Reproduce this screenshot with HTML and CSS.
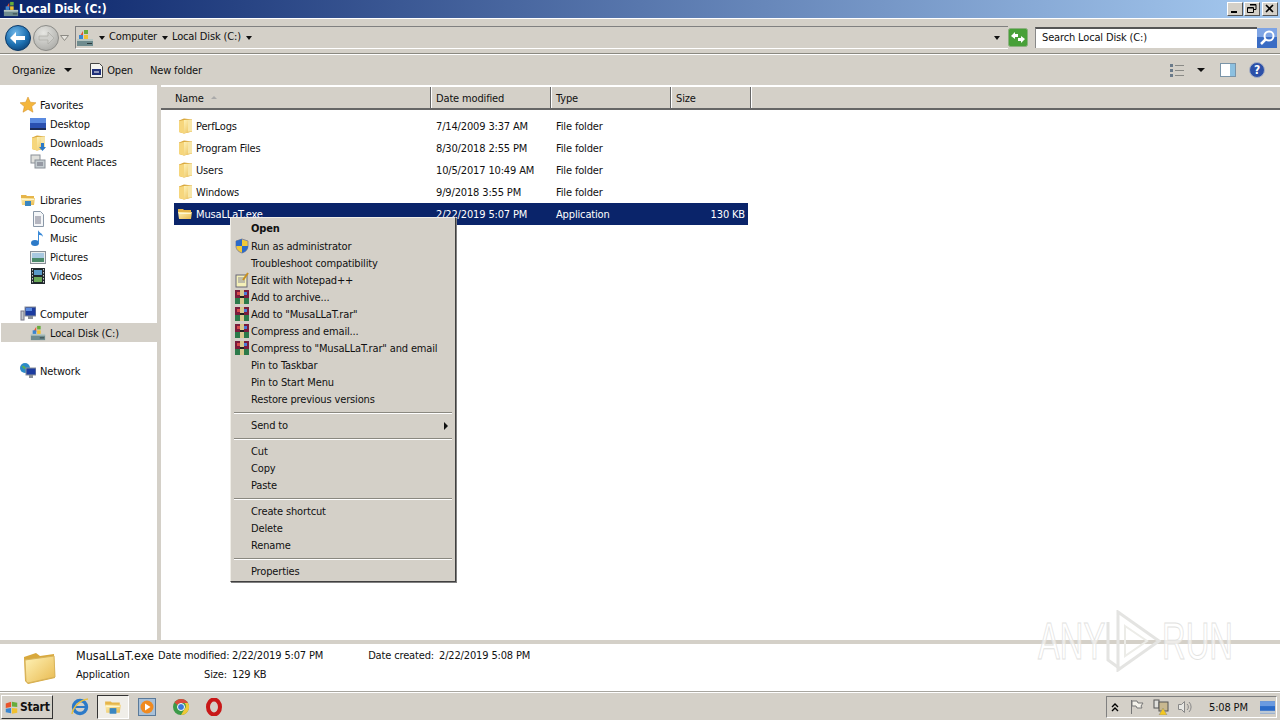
FILE: index.html
```html
<!DOCTYPE html>
<html>
<head>
	<meta charset="UTF-8">
	<title>Local Disk (C:)</title>
	<link rel="stylesheet" href="styles.css">
</head>
<body>
	<svg class="defs" width="0" height="0">
		<defs>
			<linearGradient id="gFolder" x1="0" y1="0" x2="1" y2="1">
				<stop offset="0" stop-color="#fff3b8"/>
				<stop offset="1" stop-color="#e8b94e"/>
			</linearGradient>
			<radialGradient id="gBack" cx=".4" cy=".3" r=".8">
				<stop offset="0" stop-color="#6fb6e8"/>
				<stop offset=".6" stop-color="#1c6fb0"/>
				<stop offset="1" stop-color="#0c3c6e"/>
			</radialGradient>
			<radialGradient id="gForward" cx=".4" cy=".3" r=".8">
				<stop offset="0" stop-color="#e6e6e2"/>
				<stop offset="1" stop-color="#a8a8a4"/>
			</radialGradient>
			<symbol id="i-folder" viewBox="0 0 16 16">
				<path d="M2 2.500l5-2 8 1v12l-8 2-5-1.500z" fill="#d9a73c"/>
				<path d="M7 2l8-.500v12l-8 2z" fill="url(#gFolder)"/>
				<path d="M2 3l5-1v13.500l-5-1.500z" fill="#f6d67c"/>
				<path d="M11 2h4v11.500h-4z" fill="#f7e6a8"/>
			</symbol>
			<symbol id="i-folder-open" viewBox="0 0 16 16">
				<path d="M1 3h5l1 1h7v3H1z" fill="#e6b54a"/>
				<path d="M1 6h14l-1 7H2z" fill="url(#gFolder)"/>
				<path d="M2 7h12v1H2z" fill="#fff6cf"/>
			</symbol>
			<symbol id="i-drive" viewBox="0 0 18 18">
				<rect x="1" y="11" width="16" height="6" fill="#6f8c8f"/>
				<rect x="1" y="10" width="16" height="2" fill="#b6c6c2"/>
				<rect x="11" y="14" width="5" height="1" fill="#2a3a3c"/>
				<path d="M4 7l3-5v6z" fill="#e8542c"/>
				<rect x="8" y="1" width="4" height="4" fill="#67ac3c"/>
				<rect x="3" y="6" width="4" height="4" fill="#3a86d0"/>
				<rect x="8" y="6" width="4" height="4" fill="#f0c030"/>
			</symbol>
			<symbol id="i-rar" viewBox="0 0 16 16">
				<rect x="1" y="1" width="14" height="14" fill="#7a1c3c"/>
				<rect x="1" y="9" width="14" height="6" fill="#2c7a4a"/>
				<rect x="3" y="3" width="4" height="3" fill="#d84a4a"/>
				<rect x="9" y="3" width="4" height="3" fill="#4a7ad8"/>
				<rect x="6" y="1" width="4" height="14" fill="#d8c890"/>
				<rect x="6" y="7" width="4" height="2" fill="#222"/>
			</symbol>
		</defs>
	</svg>

	<div class="window">
		<div class="title-bar">
			<svg width="16" height="16"><use href="#i-drive"/></svg>
			<span class="title-txt">Local Disk (C:)</span>
			<div class="win-btns">
				<div class="win-btn"><svg width="14" height="12" viewBox="0 0 14 12"><rect x="3" y="8" width="6" height="2" fill="#000"/></svg></div>
				<div class="win-btn"><svg width="14" height="12" viewBox="0 0 14 12"><path d="M5 1.500h6v5h-2M2.500 4.500h6v5h-6z" fill="none" stroke="#000"/><path d="M5 2h6M3 5h5" stroke="#000"/></svg></div>
				<div class="win-btn win-close"><svg width="14" height="12" viewBox="0 0 14 12"><path d="M3 2l7 7M10 2l-7 7" stroke="#000" stroke-width="1.600"/></svg></div>
			</div>
		</div>

		<div class="nav-bar">
			<svg class="nav-round" width="26" height="26" viewBox="0 0 26 26">
				<circle cx="13" cy="13" r="12.500" fill="url(#gBack)" stroke="#0d3a68"/>
				<path d="M5 13l6-6v4h9v4h-9v4z" fill="#fff"/>
			</svg>
			<svg class="nav-round" width="26" height="26" viewBox="0 0 26 26">
				<circle cx="13" cy="13" r="12.500" fill="url(#gForward)" stroke="#8c8c88"/>
				<path d="M21 13l-6-6v4H6v4h9v4z" fill="#cfcfcb" stroke="#a4a4a0" stroke-width=".6"/>
			</svg>
			<svg class="nav-drop" width="9" height="6" viewBox="0 0 9 6"><path d="M.5.5h8L4.500 5.500z" fill="#e6e4de" stroke="#8c8a84"/></svg>
			<div class="address">
				<svg width="18" height="18"><use href="#i-drive"/></svg>
				<i class="arrow addr-first"></i>
				<span class="crumb">Computer</span>
				<i class="arrow"></i>
				<span class="crumb">Local Disk (C:)</span>
				<i class="arrow"></i>
				<i class="arrow addr-drop"></i>
			</div>
			<svg class="refresh" width="20" height="19" viewBox="0 0 20 19">
				<rect x=".5" y=".5" width="19" height="18" rx="2" fill="#48a038" stroke="#8cb080"/>
				<path d="M3 8l4-4v2h3v3H7v2zM17 11l-4 4v-2h-3v-3h3V8z" fill="#fff"/>
			</svg>
			<div class="search-box">Search Local Disk (C:)</div>
			<svg width="20" height="20" viewBox="0 0 20 20">
				<rect width="20" height="20" fill="#3a6cc4"/>
				<rect width="20" height="9" fill="#7ea4e4"/>
				<circle cx="12" cy="8" r="4.500" fill="none" stroke="#fff" stroke-width="2"/>
				<path d="M9 11l-5 5" stroke="#fff" stroke-width="2.500"/>
			</svg>
		</div>

		<div class="tool-bar">
			<span class="tool-item">Organize</span>
			<i class="arrow tool-arrow"></i>
			<svg width="15" height="17" viewBox="0 0 15 17">
				<path d="M1.500 1.500h9l3 3v11h-12z" fill="#f4f4f0" stroke="#444"/>
				<rect x="3" y="7" width="9" height="6" fill="#20307a"/>
				<path d="M5 10h5" stroke="#fff"/>
			</svg>
			<span class="tool-item tool-open">Open</span>
			<span class="tool-item tool-new">New folder</span>
			<svg class="views-icon" width="15" height="13" viewBox="0 0 15 13">
				<path d="M1 1.500h3M1 6.500h3M1 11.500h3" stroke="#6a7a8a" stroke-width="3"/>
				<path d="M6 1.500h9M6 6.500h9M6 11.500h9" stroke="#8a8a86"/>
			</svg>
			<i class="arrow views-arrow"></i>
			<svg width="16" height="14" viewBox="0 0 16 14">
				<rect x=".5" y=".5" width="15" height="13" fill="#fff" stroke="#7a94a8"/>
				<rect x="10" y="1" width="5" height="12" fill="#8cc0e0"/>
			</svg>
			<svg class="help-icon" width="16" height="16" viewBox="0 0 16 16">
				<circle cx="8" cy="8" r="7.500" fill="#2c50a8" stroke="#a8b0c4"/>
				<text x="8" y="12" class="help-mark">?</text>
			</svg>
		</div>

		<div class="main">
			<div class="side-bar">
				<div class="tree-row tree-top">
					<svg width="16" height="16" viewBox="0 0 16 16"><path d="M8 0l2.300 5.200 5.700.6-4.300 3.800 1.300 5.600L8 12.300l-5 2.900 1.300-5.600L0 5.800l5.700-.6z" fill="#f4b63c" stroke="#d08a20" stroke-width=".5"/></svg>
					<span>Favorites</span>
				</div>
				<div class="tree-row tree-sub">
					<svg width="16" height="16" viewBox="0 0 16 16"><rect y="2" width="16" height="12" fill="#2a50b0"/><rect y="2" width="16" height="5" fill="#5a8ae0"/><rect y="12" width="16" height="2" fill="#1c2c58"/></svg>
					<span>Desktop</span>
				</div>
				<div class="tree-row tree-sub">
					<svg width="16" height="16" viewBox="0 0 16 16"><use href="#i-folder"/><path d="M11 8h3v4h2l-3.500 4L9 12h2z" fill="#2c7ac8"/></svg>
					<span>Downloads</span>
				</div>
				<div class="tree-row tree-sub tree-end">
					<svg width="16" height="16" viewBox="0 0 16 16"><rect x="1" y="1" width="9" height="8" fill="#e0e0dc" stroke="#8a9098"/><rect x="5" y="6" width="10" height="8" fill="#c4ccd0" stroke="#8a9098"/><path d="M7 9h6M7 11h6" stroke="#667"/></svg>
					<span>Recent Places</span>
				</div>

				<div class="tree-row tree-top">
					<svg width="16" height="16" viewBox="0 0 16 16"><use href="#i-folder-open"/><rect x="5" y="9" width="6" height="5" fill="#3a86c0"/></svg>
					<span>Libraries</span>
				</div>
				<div class="tree-row tree-sub">
					<svg width="16" height="16" viewBox="0 0 16 16"><path d="M3.500 .5h7l3 3v12h-10z" fill="#f4f6f8" stroke="#8a98a8"/><path d="M5 6h6M5 8h6M5 10h6M5 12h6" stroke="#778"/></svg>
					<span>Documents</span>
				</div>
				<div class="tree-row tree-sub">
					<svg width="16" height="16" viewBox="0 0 16 16"><ellipse cx="5" cy="13" rx="4" ry="3" fill="#2c7ac8"/><path d="M8 13V0c1 3 5 3 5 7-1-2-3-2-4-2v8z" fill="#3a8ad8"/></svg>
					<span>Music</span>
				</div>
				<div class="tree-row tree-sub">
					<svg width="16" height="16" viewBox="0 0 16 16"><rect x=".5" y="2.500" width="15" height="12" fill="#e8ecec" stroke="#8a9098"/><rect x="2" y="4" width="12" height="5" fill="#a8c8e0"/><rect x="2" y="9" width="12" height="4" fill="#4a8a6a"/></svg>
					<span>Pictures</span>
				</div>
				<div class="tree-row tree-sub tree-end">
					<svg width="16" height="16" viewBox="0 0 16 16"><rect x="1" width="14" height="16" fill="#20282c"/><rect x="4" y="2" width="8" height="5" fill="#5a9ac8"/><rect x="4" y="9" width="8" height="5" fill="#6aa858"/><path d="M2.500 1v14M13.500 1v14" stroke="#ccc" stroke-dasharray="1.500 1.500"/></svg>
					<span>Videos</span>
				</div>

				<div class="tree-row tree-top">
					<svg width="16" height="16" viewBox="0 0 16 16"><rect x="5" y="1" width="11" height="9" fill="#1c3ca0" stroke="#8a9098"/><rect x="6" y="2" width="6" height="3" fill="#5a8ae0"/><rect x="8" y="10" width="5" height="3" fill="#8a9098"/><rect x="1" y="5" width="3" height="9" fill="#c4c8cc" stroke="#778"/></svg>
					<span>Computer</span>
				</div>
				<div class="tree-row tree-sub tree-active tree-end">
					<svg width="16" height="16" viewBox="0 0 18 18"><use href="#i-drive"/></svg>
					<span>Local Disk (C:)</span>
				</div>

				<div class="tree-row tree-top">
					<svg width="16" height="16" viewBox="0 0 16 16"><circle cx="5" cy="5" r="5" fill="#2c8ac8"/><path d="M2 3c2-1 3 1 4 2-1 2-3 1-4-2z" fill="#58b050"/><rect x="6" y="5" width="10" height="7" fill="#1c3ca0" stroke="#8a9098"/><rect x="9" y="12" width="4" height="3" fill="#8a9098"/></svg>
					<span>Network</span>
				</div>
			</div>

			<div class="content">
				<div class="col-head">
					<div class="col col-name">Name <i class="sort-mark"></i></div>
					<div class="col col-date">Date modified</div>
					<div class="col col-type">Type</div>
					<div class="col col-size">Size</div>
					<div class="col col-rest"></div>
				</div>
				<div class="file-list">
					<div class="file-row">
						<div class="cell cell-name"><svg width="16" height="16"><use href="#i-folder"/></svg>PerfLogs</div>
						<div class="cell cell-date">7/14/2009 3:37 AM</div>
						<div class="cell cell-type">File folder</div>
						<div class="cell cell-size"></div>
					</div>
					<div class="file-row">
						<div class="cell cell-name"><svg width="16" height="16"><use href="#i-folder"/></svg>Program Files</div>
						<div class="cell cell-date">8/30/2018 2:55 PM</div>
						<div class="cell cell-type">File folder</div>
						<div class="cell cell-size"></div>
					</div>
					<div class="file-row">
						<div class="cell cell-name"><svg width="16" height="16"><use href="#i-folder"/></svg>Users</div>
						<div class="cell cell-date">10/5/2017 10:49 AM</div>
						<div class="cell cell-type">File folder</div>
						<div class="cell cell-size"></div>
					</div>
					<div class="file-row">
						<div class="cell cell-name"><svg width="16" height="16"><use href="#i-folder"/></svg>Windows</div>
						<div class="cell cell-date">9/9/2018 3:55 PM</div>
						<div class="cell cell-type">File folder</div>
						<div class="cell cell-size"></div>
					</div>
					<div class="file-row file-selected">
						<div class="cell cell-name"><svg width="16" height="16"><use href="#i-folder-open"/></svg>MusaLLaT.exe</div>
						<div class="cell cell-date">2/22/2019 5:07 PM</div>
						<div class="cell cell-type">Application</div>
						<div class="cell cell-size">130 KB</div>
					</div>
				</div>
			</div>
		</div>

		<div class="details">
			<svg class="details-icon" width="36" height="36" viewBox="0 0 36 36">
				<path d="M2 8l12-4 4 3 14-2 1 24-27 6-3-3z" fill="#d8a83c"/>
				<path d="M3 11l29-4 1 21-27 6-2-2z" fill="url(#gFolder)" stroke="#d8b45c"/>
			</svg>
			<div class="details-grid">
				<div class="details-name">MusaLLaT.exe</div>
				<div class="details-label">Date modified:</div>
				<div class="details-val">2/22/2019 5:07 PM</div>
				<div class="details-label">Date created:</div>
				<div class="details-val">2/22/2019 5:08 PM</div>
				<div>Application</div>
				<div class="details-label">Size:</div>
				<div class="details-val">129 KB</div>
			</div>
		</div>

		<div class="task-bar">
			<div class="start-btn">
				<svg width="15" height="15" viewBox="0 0 17 17">
					<path d="M2 4l6-2v6l-6 1z" fill="#e8542c"/><path d="M9 2l6 1v5l-6-.500z" fill="#67ac3c"/>
					<path d="M2 10l6-1v6l-6-1z" fill="#3a86d0"/><path d="M9 9l6 .500v5l-6 1z" fill="#f0c030"/>
				</svg>
				<span>Start</span>
			</div>
			<svg class="task-ie" width="20" height="20" viewBox="0 0 20 20">
				<circle cx="10" cy="10" r="6.500" fill="none" stroke="#2c7ac8" stroke-width="3.400"/>
				<path d="M5 10h10" stroke="#2c7ac8" stroke-width="2"/>
				<path d="M2 17C3 10 10 3 18 2" fill="none" stroke="#e8c040" stroke-width="1.500"/>
			</svg>
			<div class="task-folder">
				<svg width="18" height="18" viewBox="0 0 16 16"><use href="#i-folder-open"/><rect x="5" y="9" width="6" height="5" fill="#3a86c0"/></svg>
			</div>
			<svg class="task-wmp" width="18" height="18" viewBox="0 0 18 18">
				<rect x=".5" y=".5" width="17" height="17" fill="#a8c0d8" stroke="#5a7a9a"/>
				<circle cx="9" cy="9" r="6.500" fill="#f08a20"/>
				<path d="M7 5.500l5.500 3.500L7 12.500z" fill="#fff"/>
			</svg>
			<svg class="task-chrome" width="18" height="18" viewBox="0 0 18 18">
				<circle cx="9" cy="9" r="8" fill="#3c9a48"/>
				<path d="M9 1a8 8 0 0 1 7 4H9a4 4 0 0 0-3.500 2L2.500 4.500A8 8 0 0 1 9 1z" fill="#d84a3c"/>
				<path d="M16 5a8 8 0 0 1-7 12l3.500-6a4 4 0 0 0 0-6z" fill="#f0c838"/>
				<circle cx="9" cy="9" r="3.500" fill="#3a78d8" stroke="#fff"/>
			</svg>
			<svg class="task-opera" width="18" height="18" viewBox="0 0 18 18">
				<ellipse cx="9" cy="9" rx="6" ry="7.500" fill="none" stroke="#c81818" stroke-width="4"/>
			</svg>
			<div class="tray">
				<svg width="8" height="9" viewBox="0 0 8 9"><path d="M1 4l3-3 3 3M1 8l3-3 3 3" fill="none" stroke="#000" stroke-width="1.400"/></svg>
				<svg class="tray-flag" width="16" height="16" viewBox="0 0 16 16"><path d="M2.500 1v14" stroke="#777"/><path d="M3 2h5l1 2h5l-2 3 1 2H8L7 7H3z" fill="#f4f2ea" stroke="#777"/></svg>
				<svg class="tray-net" width="16" height="16" viewBox="0 0 16 16"><rect x="1" y="1" width="5" height="8" fill="#e0e0dc" stroke="#555"/><rect x="6" y="3" width="9" height="9" fill="#c8b890" stroke="#555"/><path d="M10 9l4 7H6z" fill="#f4c820" stroke="#888" stroke-width=".5"/></svg>
				<svg class="tray-sound" width="16" height="16" viewBox="0 0 16 16"><path d="M1.500 5.500h3l3-3v11l-3-3h-3z" fill="#e8e8e4" stroke="#888"/><path d="M10 5a4 4 0 0 1 0 6M12 3a7 7 0 0 1 0 10" fill="none" stroke="#888"/></svg>
				<span class="tray-time">5:08 PM</span>
				<svg class="tray-desk" width="15" height="13" viewBox="0 0 16 13"><rect width="16" height="13" fill="#2a6ac8"/><rect width="16" height="5" fill="#6a9ae0"/><rect y="10" width="16" height="3" fill="#bcc8d4"/></svg>
			</div>
		</div>
	</div>

	<div class="context-menu">
		<div class="menu-item menu-bold">Open</div>
		<div class="menu-item">
			<svg class="menu-icon" width="16" height="16" viewBox="0 0 16 16"><path d="M8 1l6 2v5c0 4-3 6-6 7-3-1-6-3-6-7V3z" fill="#f0c838" stroke="#889"/><path d="M8 1v7H2V3zM8 8h6c0 4-3 6-6 7z" fill="#2c6ac8"/></svg>
			Run as administrator
		</div>
		<div class="menu-item">Troubleshoot compatibility</div>
		<div class="menu-item">
			<svg class="menu-icon" width="16" height="16" viewBox="0 0 16 16"><rect x="2" y="3" width="11" height="12" fill="#f4f0b8" stroke="#667"/><path d="M4 6h7M4 8h7M4 10h7" stroke="#889"/><path d="M14 1l-5 7" stroke="#c89020" stroke-width="2"/></svg>
			Edit with Notepad++
		</div>
		<div class="menu-item"><svg class="menu-icon" width="16" height="16"><use href="#i-rar"/></svg>Add to archive...</div>
		<div class="menu-item"><svg class="menu-icon" width="16" height="16"><use href="#i-rar"/></svg>Add to "MusaLLaT.rar"</div>
		<div class="menu-item"><svg class="menu-icon" width="16" height="16"><use href="#i-rar"/></svg>Compress and email...</div>
		<div class="menu-item"><svg class="menu-icon" width="16" height="16"><use href="#i-rar"/></svg>Compress to "MusaLLaT.rar" and email</div>
		<div class="menu-item">Pin to Taskbar</div>
		<div class="menu-item">Pin to Start Menu</div>
		<div class="menu-item">Restore previous versions</div>
		<div class="menu-sep"></div>
		<div class="menu-item menu-sub">Send to</div>
		<div class="menu-sep"></div>
		<div class="menu-item">Cut</div>
		<div class="menu-item">Copy</div>
		<div class="menu-item">Paste</div>
		<div class="menu-sep"></div>
		<div class="menu-item">Create shortcut</div>
		<div class="menu-item">Delete</div>
		<div class="menu-item">Rename</div>
		<div class="menu-sep"></div>
		<div class="menu-item">Properties</div>
	</div>

	<div class="watermark">
		<span class="wm-txt">ANY</span>
		<svg width="56" height="62" viewBox="0 0 56 62">
			<path d="M2 12v38l11 8" fill="none" stroke="#e4e4e2" stroke-width="3"/>
			<path d="M12 2l41 29-41 29z" fill="none" stroke="#e4e4e2" stroke-width="3"/>
			<path d="M19 16l22 15-22 15z" fill="none" stroke="#ecece8" stroke-width="2"/>
		</svg>
		<span class="wm-txt">RUN</span>
	</div>
</body>
</html>
```

FILE: styles.css
```css
* {
	margin: 0;
	padding: 0;
	box-sizing: border-box;
}

body {
	width: 1280px;
	height: 720px;
	overflow: hidden;
	background: #d4d0c8;
	color: #111;
	font-family: "DejaVu Sans Condensed", "DejaVu Sans", sans-serif;
	font-stretch: condensed;
	font-size: 11px;
	letter-spacing: -0.15px;
}

svg {
	display: block;
	flex: none;
}

.defs {
	position: absolute;
}

.window {
	display: flex;
	flex-direction: column;
	height: 720px;
}

.window > div {
	flex: none;
}

/* title bar */
.title-bar {
	display: flex;
	align-items: center;
	height: 18px;
	padding-left: 3px;
	background: linear-gradient(to right, #0a246a, #a6caf0);
	color: #fff;
	font-size: 12px;
	font-weight: bold;
	letter-spacing: 0;
}

.win-btns {
	display: flex;
	margin-left: auto;
	margin-right: 2px;
}

.win-btn {
	width: 16px;
	height: 14px;
	margin-left: 1px;
	background: #d4d0c8;
	border: 1px solid;
	border-color: #fff #555 #555 #fff;
}

.win-close {
	margin-left: 2px;
}

/* navigation */
.nav-bar {
	display: flex;
	align-items: center;
	height: 36px;
	padding: 3px 3px 0 5px;
	border-top: 1px solid #fff;
	border-bottom: 1px solid #8a8880;
}

.nav-round {
	margin-right: 2px;
}

.nav-drop {
	margin: 0 6px 0 -1px;
}

.address {
	display: flex;
	align-items: center;
	flex: 1;
	height: 23px;
	border-top: 1px solid #808080;
	border-left: 1px solid #808080;
	border-bottom: 1px solid #fff;
}

.addr-first {
	margin-left: 5px;
}

.crumb {
	margin: -2px 5px 0 4px;
}

.addr-drop {
	margin-left: auto;
	margin-right: 8px;
}

.arrow {
	display: block;
	flex: none;
	width: 0;
	height: 0;
	border-left: 3px solid transparent;
	border-right: 3px solid transparent;
	border-top: 4px solid #111;
}

.refresh {
	margin: 0 7px 0 0;
}

.search-box {
	width: 222px;
	height: 21px;
	padding-left: 6px;
	line-height: 18px;
	background: #fff;
	border-top: 2px solid #555;
	border-left: 1px solid #888;
}

/* toolbar */
.tool-bar {
	display: flex;
	align-items: center;
	height: 31px;
	padding: 0 15px 0 12px;
	border-top: 1px solid #fff;
}

.tool-item {
	padding-top: 1px;
}

.tool-arrow {
	margin: 0 17px 0 9px;
	border-width: 4px 4px 0;
}

.tool-open {
	margin-left: 3px;
}

.tool-new {
	margin-left: 17px;
}

.views-icon {
	margin-left: auto;
}

.views-arrow {
	margin: 0 15px 0 13px;
	border-width: 4px 4px 0;
}

.help-icon {
	margin-left: 13px;
}

.help-mark {
	fill: #fff;
	font-size: 12px;
	font-weight: bold;
	text-anchor: middle;
}

/* main area */
.main {
	display: flex;
	height: 555px;
}

.side-bar {
	width: 157px;
	padding-top: 10px;
	background: #fff;
	border-left: 1px solid #fff;
}

.tree-row {
	display: flex;
	align-items: center;
	height: 19px;
}

.tree-row span {
	margin-left: 4px;
	padding-top: 2px;
}

.tree-top {
	padding-left: 19px;
}

.tree-sub {
	padding-left: 29px;
}

.tree-end {
	margin-bottom: 19px;
}

.tree-active {
	background: #d4d0c8;
}

.content {
	flex: 1;
	margin-left: 4px;
	background: #fff;
}

.col-head {
	display: flex;
	height: 24px;
	margin-top: 1px;
	background: #d4d0c8;
	border-top: 1px solid #fff;
	border-bottom: 2px solid #666;
}

.col {
	display: flex;
	align-items: center;
	padding: 2px 0 0 5px;
	border-right: 1px solid #666;
	box-shadow: 1px 0 0 #fff;
}

.col-name {
	width: 270px;
	padding-left: 14px;
}

.col-date,
.col-type {
	width: 120px;
}

.col-size {
	width: 80px;
}

.col-rest {
	flex: 1;
	border-right: 0;
	box-shadow: none;
}

.sort-mark {
	display: block;
	width: 0;
	height: 0;
	margin: -2px 0 0 7px;
	border-left: 3px solid transparent;
	border-right: 3px solid transparent;
	border-bottom: 3px solid #aaa;
}

.file-list {
	padding: 5px 0 0 13px;
}

.file-row {
	display: flex;
	align-items: center;
	width: 574px;
	height: 22px;
}

.file-selected {
	background: #0a246a;
	color: #fff;
}

.cell {
	display: flex;
	align-items: center;
}

.cell-name {
	width: 257px;
	padding-left: 3px;
}

.cell-name svg {
	margin-right: 3px;
}

.cell-date,
.cell-type {
	width: 120px;
	padding-left: 5px;
}

.cell-size {
	width: 77px;
	justify-content: flex-end;
	padding-right: 3px;
}

/* details pane */
.details {
	display: flex;
	height: 48px;
	margin-top: 4px;
	padding: 3px 0 0 22px;
	background: #fff;
	border-bottom: 1px solid #a8a6a0;
}

.details-icon {
	margin: 2px 18px 0 0;
}

.details-grid {
	display: grid;
	grid-template-columns: 82px 69px 136px 71px auto;
	grid-auto-rows: 18px;
	row-gap: 1px;
	line-height: 18px;
	white-space: nowrap;
}

.details-name {
	font-size: 12.500px;
	letter-spacing: 0;
}

.details-label {
	text-align: right;
}

.details-val {
	padding-left: 5px;
}

/* taskbar */
.task-bar {
	display: flex;
	align-items: center;
	height: 28px;
	padding: 1px 3px 0 1px;
	border-top: 1px solid #fff;
}

.start-btn {
	display: flex;
	align-items: center;
	width: 52px;
	height: 24px;
	padding-left: 2px;
	background: #d4d0c8;
	border: 1px solid;
	border-color: #fff #333 #333 #fff;
	font-size: 12px;
	font-weight: bold;
	letter-spacing: -0.2px;
}

.start-btn span {
	margin-left: 1px;
}

.task-ie {
	margin-left: 17px;
}

.task-folder {
	display: flex;
	justify-content: center;
	align-items: center;
	width: 32px;
	height: 24px;
	margin-left: 7px;
	background: #f0eee8;
	border: 1px solid;
	border-color: #333 #fff #fff #333;
}

.task-wmp {
	margin-left: 9px;
}

.task-chrome {
	margin-left: 16px;
}

.task-opera {
	margin-left: 15px;
}

.tray {
	display: flex;
	align-items: center;
	width: 171px;
	height: 22px;
	margin-left: auto;
	padding-left: 4px;
	border: 1px solid;
	border-color: #808080 #fff #fff #808080;
}

.tray-flag {
	margin-left: 10px;
}

.tray-net,
.tray-sound {
	margin-left: 8px;
}

.tray-time {
	margin-left: 16px;
	white-space: nowrap;
}

.tray-desk {
	margin-left: 12px;
}

/* context menu */
.context-menu {
	position: absolute;
	left: 230px;
	top: 217px;
	width: 226px;
	height: 365px;
	padding: 3px 3px 0 3px;
	background: #d4d0c8;
	border: 1px solid;
	border-color: #f0eee8 #404040 #404040 #f0eee8;
	box-shadow: 1px 1px 0 #808080;
}

.menu-item {
	position: relative;
	height: 17px;
	padding-left: 17px;
	line-height: 17px;
	white-space: nowrap;
}

.menu-bold {
	line-height: 15px;
	font-weight: bold;
}

.menu-icon {
	position: absolute;
	left: 0;
	top: 0;
}

.menu-sub::after {
	content: "";
	position: absolute;
	right: 4px;
	top: 5px;
	border-top: 4px solid transparent;
	border-bottom: 4px solid transparent;
	border-left: 4px solid #111;
}

.menu-sep {
	height: 2px;
	margin: 3.500px 0;
	background: #8a8880;
	border-bottom: 1px solid #fff;
}

/* watermark */
.watermark {
	position: absolute;
	left: 1038px;
	top: 610px;
	display: flex;
	align-items: center;
	height: 62px;
	pointer-events: none;
}

.wm-txt {
	display: block;
	width: 68px;
	transform: scaleX(.63);
	transform-origin: left;
	color: rgba(255, 255, 255, .6);
	-webkit-text-stroke: 1px #e2e2e0;
	font-family: "Liberation Sans", sans-serif;
	font-size: 52px;
	font-stretch: normal;
	letter-spacing: 0;
	white-space: nowrap;
}
```
